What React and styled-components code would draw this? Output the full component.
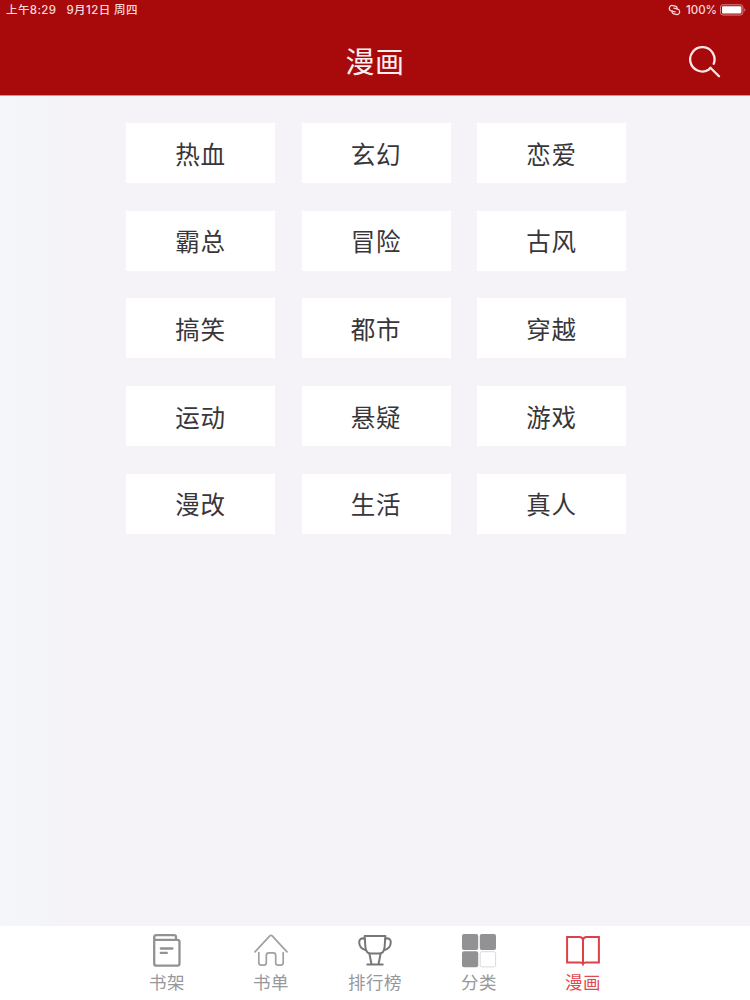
import React, { Component } from "react";
import styled, { createGlobalStyle, css } from "styled-components";

const GlobalStyle = createGlobalStyle`
  * {
    box-sizing: border-box;
  }

  body {
    margin: 0;
    font-family: "Liberation Sans", "Noto Sans CJK SC", sans-serif;
  }
`;

const Page = styled.div`
  display: flex;
  flex-direction: column;
  width: 100%;
  height: 100vh;
  overflow: hidden;
  background: linear-gradient(to right, #f4f6f8 0, #f4f5f8 44px, #f5f3f7 60px);
`;

const Header = styled.header`
  flex: none;
  height: 96px;
  background: #a80a0c;
  border-bottom: 1px solid #e08a8c;
  color: #fff0f0;
`;

const StatusBar = styled.div`
  display: flex;
  align-items: center;
  justify-content: space-between;
  height: 20px;
  padding: 0 4px 0 6px;
  font-family: Inter, "Noto Sans CJK SC", sans-serif;
  font-size: 11.5px;
  font-weight: 500;
  line-height: 20px;
  color: #fbd9da;
  white-space: pre;
`;

const StatusGroup = styled.div`
  display: flex;
  align-items: center;
  gap: ${props => props.$gap}px;
`;

const StatusText = styled.span`
  letter-spacing: ${props => props.$spacing || 0}px;
`;

const TitleBar = styled.div`
  display: grid;
  grid-template-columns: 1fr auto 1fr;
  align-items: center;
  height: 84px;
  padding-right: 29px;
  padding-left: 29px;
`;

const Title = styled.h1`
  grid-column: 2;
  margin: 0;
  padding-top: 1px;
  font-size: 29px;
  font-weight: 400;
  letter-spacing: 0.6px;
  line-height: 40px;
`;

const SearchButton = styled.button`
  justify-self: end;
  display: flex;
  padding: 0;
  border: 0;
  background: none;
  color: #ffe6e6;
`;

const CategoryGrid = styled.main`
  flex: 1;
  display: grid;
  grid-template-columns: repeat(3, 149px);
  grid-auto-rows: 60px;
  align-content: start;
  justify-content: center;
  gap: 27.7px 26.5px;
  padding: 27px 0 0 2px;
`;

const Category = styled.div`
  display: flex;
  align-items: center;
  justify-content: center;
  padding-top: 5px;
  background: #fff;
  font-size: 24.5px;
  letter-spacing: 0.7px;
  line-height: 36px;
  color: #38363a;
`;

const TabBar = styled.nav`
  flex: none;
  display: flex;
  justify-content: center;
  height: 74px;
  background: #fff;
`;

const Tab = styled.div`
  display: flex;
  flex-direction: column;
  align-items: center;
  width: 104px;
  padding-top: 7px;
  font-size: 17.5px;
  letter-spacing: 0.5px;
  line-height: 26px;
  color: #98989b;

  & svg {
    display: block;
    margin-bottom: 1px;
  }

  ${props =>
    props.$active &&
    css`
      color: #e14a50;
    `}
`;

const SearchIcon = () => (
  <svg width="32" height="32" viewBox="0 0 32 32" fill="none">
    <path
      d="M24.7 17.8A12.2 12.2 0 1 0 19.6 23.8L21.4 21.7L30 30.2"
      stroke="currentColor"
      strokeWidth="2.3"
      strokeLinecap="round"
      strokeLinejoin="round"
    />
  </svg>
);

const LinkIcon = () => (
  <svg
    width="13"
    height="12"
    viewBox="0 0 13 12"
    fill="none"
    stroke="currentColor"
    strokeWidth="1.2"
    strokeLinecap="round"
  >
    <g transform="rotate(14 6.5 6) translate(0 1)">
      <path d="M7.6 6.7H3.8A2.8 2.8 0 0 1 3.8 1.1H6.2A2.6 2.6 0 0 1 8.8 3.7" />
      <path d="M5.4 3.3H9.2A2.8 2.8 0 0 1 9.2 8.9H6.8A2.6 2.6 0 0 1 4.2 6.3" />
    </g>
  </svg>
);

const BatteryIcon = () => (
  <svg width="26" height="12" viewBox="0 0 26 12" fill="none">
    <rect x="0.5" y="0.8" width="22.4" height="10.2" rx="2.4" stroke="#db8587" />
    <rect x="2" y="2.3" width="19.4" height="7.2" rx="1" fill="#fff" />
    <path d="M24.3 4.2C25.8 4.7 25.8 7.1 24.3 7.6Z" fill="#db8587" />
  </svg>
);

const ShelfIcon = () => (
  <svg
    width="36"
    height="36"
    viewBox="0 0 36 36"
    fill="none"
    stroke="#929295"
    strokeWidth="2.3"
    strokeLinecap="round"
    strokeLinejoin="round"
  >
    <path d="M27 6.4V4.2Q27 2.2 25 2.2H7.5Q5.2 2.2 5.2 4.4V30.5Q5.2 32.7 7.4 32.7H28.4Q30.5 32.7 30.5 30.6V8.8Q30.5 6.8 28.4 6.8H7.2Q5.2 6.8 5.2 4.8" />
    <path d="M11.8 15.5H23.4M11.8 19.9H17.8" />
  </svg>
);

const HomeIcon = () => (
  <svg
    width="36"
    height="36"
    viewBox="0 0 36 36"
    fill="none"
    stroke="#a0a0a3"
    strokeWidth="1.7"
    strokeLinecap="round"
    strokeLinejoin="round"
  >
    <path d="M2 18.8L16.8 2.9Q18 1.8 19.2 2.9L34 18.8" />
    <path d="M5.8 19.6V29.5Q5.8 32.2 8.5 32.2H10.8Q13.3 32.2 13.3 29.8V22.4Q13.3 19.8 15.9 19.8H20.1Q22.7 19.8 22.7 22.4V29.8Q22.7 32.2 25.2 32.2H27.6Q30.2 32.2 30.2 29.5V19.6" />
  </svg>
);

const TrophyIcon = () => (
  <svg
    width="36"
    height="36"
    viewBox="0 0 36 36"
    fill="none"
    stroke="#77777a"
    strokeWidth="2"
    strokeLinecap="round"
    strokeLinejoin="round"
  >
    <path d="M7.6 3.1H28.4L27.6 14C27.2 18.2 25.4 20.6 22.3 20.6H13.7C10.6 20.6 8.8 18.2 8.4 14Z" />
    <path d="M7.8 5.9C4.5 4.5 2.2 6.1 2.2 9.2C2.2 13.2 4.7 16 9 17.2M28.2 5.9C31.5 4.5 33.8 6.1 33.8 9.2C33.8 13.2 31.3 16 27 17.2" />
    <path d="M12.4 20.6L14.4 30.8M23.6 20.6L21.6 30.8M10.3 31.4H25.7" />
  </svg>
);

const GridIcon = () => (
  <svg width="36" height="36" viewBox="0 0 36 36">
    <rect x="1" y="1" width="16.2" height="16" rx="2" fill="#929295" />
    <rect x="18.8" y="1" width="16.2" height="16" rx="2" fill="#929295" />
    <rect x="1" y="18.3" width="16.2" height="16" rx="2" fill="#929295" />
    <rect
      x="19.2"
      y="18.7"
      width="15.4"
      height="15.2"
      rx="1.8"
      fill="#fff"
      stroke="#d5d5d8"
      strokeWidth="0.9"
    />
  </svg>
);

const BookIcon = () => (
  <svg
    width="36"
    height="36"
    viewBox="0 0 36 36"
    fill="none"
    stroke="#dc4147"
    strokeWidth="2"
  >
    <path d="M18 6.6Q17 4 14.6 4H2.1V29.4H15.2Q17.3 29.4 18 31Q18.7 29.4 20.8 29.4H33.9V4H21.4Q19 4 18 6.6V31" />
  </svg>
);

const tabs = [
  { label: "书架", icon: ShelfIcon },
  { label: "书单", icon: HomeIcon },
  { label: "排行榜", icon: TrophyIcon },
  { label: "分类", icon: GridIcon },
  { label: "漫画", icon: BookIcon }
];

class App extends Component {
  state = {
    currentTab: "漫画",
    categories: [
      "热血",
      "玄幻",
      "恋爱",
      "霸总",
      "冒险",
      "古风",
      "搞笑",
      "都市",
      "穿越",
      "运动",
      "悬疑",
      "游戏",
      "漫改",
      "生活",
      "真人"
    ]
  };

  handleTab = label => {
    this.setState({ currentTab: label });
  };

  render() {
    const { currentTab, categories } = this.state;

    return (
      <Page>
        <GlobalStyle />
        <Header>
          <StatusBar>
            <StatusGroup $gap={10}>
              <StatusText $spacing={0.4}>上午8:29</StatusText>
              <StatusText $spacing={0.4}>9月12日 周四</StatusText>
            </StatusGroup>
            <StatusGroup $gap={5}>
              <LinkIcon />
              <StatusGroup $gap={3}>
                <StatusText>100%</StatusText>
                <BatteryIcon />
              </StatusGroup>
            </StatusGroup>
          </StatusBar>
          <TitleBar>
            <Title>漫画</Title>
            <SearchButton aria-label="搜索">
              <SearchIcon />
            </SearchButton>
          </TitleBar>
        </Header>
        <CategoryGrid>
          {categories.map(name => (
            <Category key={name}>{name}</Category>
          ))}
        </CategoryGrid>
        <TabBar>
          {tabs.map(({ label, icon: Icon }) => (
            <Tab
              key={label}
              $active={label === currentTab}
              onClick={() => this.handleTab(label)}
            >
              <Icon />
              {label}
            </Tab>
          ))}
        </TabBar>
      </Page>
    );
  }
}

export default App;
